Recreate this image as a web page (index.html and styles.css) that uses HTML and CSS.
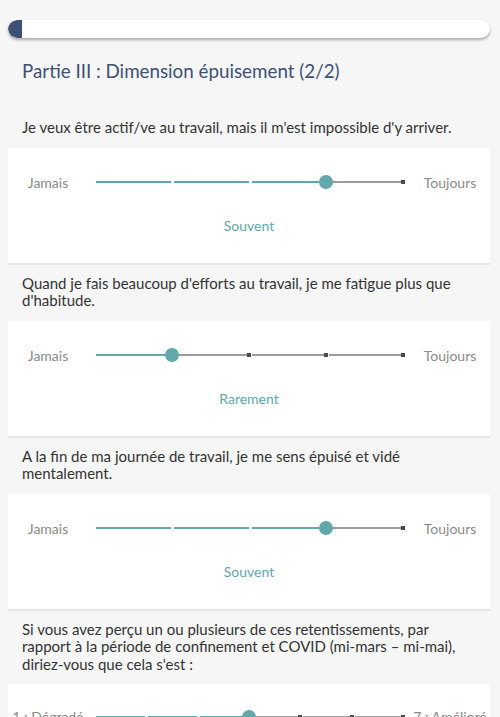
FILE: index.html
```html
<!DOCTYPE html>
<html lang="fr">
<head>
    <meta charset="UTF-8">
    <meta name="viewport" content="width=device-width, initial-scale=1.0">
    <title>Questionnaire - Partie III</title>
    <link rel="stylesheet" href="styles.css">
</head>
<body>
    <div id="survey">
        <div class="progress">
            <div class="progress-fill" style="width: 3%"></div>
        </div>

        <h1 class="part-title">Partie III : Dimension épuisement (2/2)</h1>

        <div class="question">
            <p class="question-text">Je veux être actif/ve au travail, mais il m'est impossible d'y arriver.</p>
            <div class="card">
                <div class="scale">
                    <span class="scale-label">Jamais</span>
                    <div class="track">
                        <div class="seg on"></div><div class="seg on"></div><div class="seg on"></div><div class="seg"></div>
                        <span class="tick" style="left: 100%"></span>
                        <span class="thumb" style="left: 75%"></span>
                    </div>
                    <span class="scale-label">Toujours</span>
                </div>
                <div class="value">Souvent</div>
            </div>
        </div>

        <div class="question">
            <p class="question-text">Quand je fais beaucoup d'efforts au travail, je me fatigue plus que d'habitude.</p>
            <div class="card">
                <div class="scale">
                    <span class="scale-label">Jamais</span>
                    <div class="track">
                        <div class="seg on"></div><div class="seg"></div><div class="seg"></div><div class="seg"></div>
                        <span class="tick" style="left: 50%"></span>
                        <span class="tick" style="left: 75%"></span>
                        <span class="tick" style="left: 100%"></span>
                        <span class="thumb" style="left: 25%"></span>
                    </div>
                    <span class="scale-label">Toujours</span>
                </div>
                <div class="value">Rarement</div>
            </div>
        </div>

        <div class="question">
            <p class="question-text">A la fin de ma journée de travail, je me sens épuisé et vidé mentalement.</p>
            <div class="card">
                <div class="scale">
                    <span class="scale-label">Jamais</span>
                    <div class="track">
                        <div class="seg on"></div><div class="seg on"></div><div class="seg on"></div><div class="seg"></div>
                        <span class="tick" style="left: 100%"></span>
                        <span class="thumb" style="left: 75%"></span>
                    </div>
                    <span class="scale-label">Toujours</span>
                </div>
                <div class="value">Souvent</div>
            </div>
        </div>

        <div class="question">
            <p class="question-text">Si vous avez perçu un ou plusieurs de ces retentissements, par rapport à la période de confinement et COVID (mi-mars – mi-mai), diriez-vous que cela s'est :</p>
            <div class="card card-last">
                <div class="scale">
                    <span class="scale-label">1 : Dégradé</span>
                    <div class="track">
                        <div class="seg on"></div><div class="seg on"></div><div class="seg on"></div><div class="seg"></div><div class="seg"></div><div class="seg"></div>
                        <span class="tick" style="left: 66.67%"></span>
                        <span class="tick" style="left: 83.33%"></span>
                        <span class="tick" style="left: 100%"></span>
                        <span class="thumb" style="left: 50%"></span>
                    </div>
                    <span class="scale-label">7 : Amélioré</span>
                </div>
                <div class="value">Stable</div>
            </div>
        </div>
    </div>
</body>
</html>
```

FILE: styles.css
```css
body {
    margin: 0;
    background-color: #f6f6f6;
    font-family: "Lato", "Noto Sans", sans-serif;
    color: #333;
}
#survey {
    padding: 20px 10px 40px 8px;
}
.progress {
    height: 18px;
    background-color: white;
    border-radius: 9px;
    box-shadow: 0 2px 3px rgba(0, 0, 0, 0.3);
    overflow: hidden;
}
.progress-fill {
    height: 100%;
    background-color: #3d5078;
    border-radius: 9px 0 0 9px;
}
.part-title {
    margin: 21px 0 0 14px;
    font-size: 18.8px;
    line-height: 24px;
    font-weight: normal;
    color: #3e5075;
}
.part-title + .question .question-text {
    padding-top: 36px;
}
.question-text {
    margin: 0;
    padding: 10px 12px 11px 14px;
    font-size: 15px;
    line-height: 17.5px;
    color: #333;
}
.card {
    background-color: white;
    border-bottom: 2px solid #e6e6e6;
    padding: 26px 0 29px;
}
.card-last {
    padding-top: 24px;
}
.scale {
    display: grid;
    grid-template-columns: 80px 1fr 80px;
    align-items: center;
}
.scale-label {
    text-align: center;
    font-size: 14px;
    color: #8a8a8a;
    white-space: nowrap;
}
.track {
    position: relative;
    display: flex;
    align-items: center;
    gap: 3px;
    height: 16px;
    margin: 0 6px 0 8px;
}
.seg {
    flex: 1;
    height: 2px;
    background-color: #9b9b9b;
}
.seg.on {
    background-color: #62a8aa;
}
.tick {
    position: absolute;
    top: 6px;
    width: 4px;
    height: 4px;
    margin-left: -3px;
    background-color: #4a4a4a;
}
.thumb {
    position: absolute;
    top: 1px;
    width: 14px;
    height: 14px;
    margin-left: -8px;
    border-radius: 50%;
    background-color: #62a8aa;
}
.value {
    margin-top: 26px;
    text-align: center;
    font-size: 14px;
    color: #5fa8aa;
}
```
